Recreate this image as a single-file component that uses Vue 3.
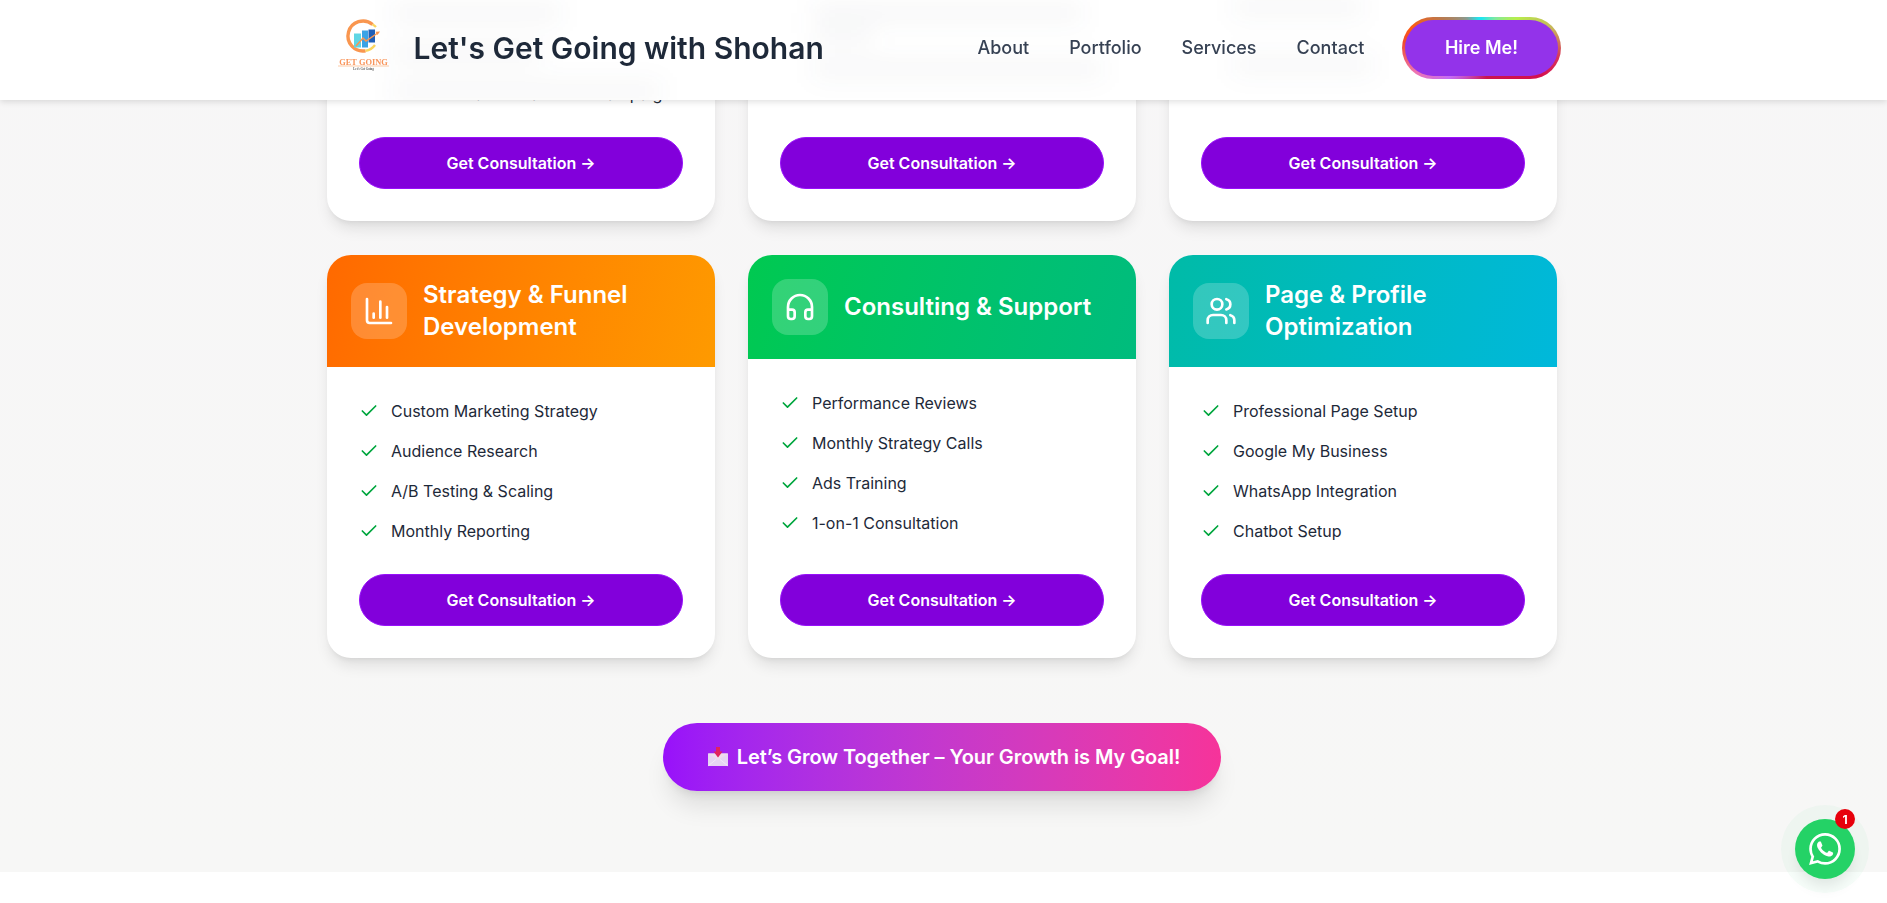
<template>
  <div class="page">
    <header class="site-header">
      <span class="smudges"></span>
      <div class="header-inner">
        <div class="brand">
          <svg class="logo" viewBox="0 0 64 64" aria-label="Get Going logo">
            <path d="M44.6 8.5A15 15 0 1 0 37.6 34.8" fill="none" stroke="#f9964f" stroke-width="3.4" />
            <path d="M44.6 8.5A15 15 0 0 1 48 11" fill="none" stroke="#fbd65e" stroke-width="2.4" />
            <path d="M37.6 34.8A15 15 0 0 0 47 29" fill="none" stroke="#fbd65e" stroke-width="2.4" />
            <path d="M26 17.5h7v14h-7z" fill="#5fd6e4" />
            <path d="M34 14.5h6v17h-6z" fill="#3aa3e6" />
            <path d="M40.5 13.5h6.5v13h-6.5z" fill="#1f5fb8" />
            <path d="M28 30l7-8 3 3 11-7.5" fill="none" stroke="#f9964f" stroke-width="1.5" />
            <path d="M52 15.5l-4.5.2 2 3.4z" fill="#f9964f" />
            <text x="35.5" y="48.5" class="logo-name">GET GOING</text>
            <path d="M10 50h51" stroke="#f9964f" stroke-width="0.5" />
            <text x="35.5" y="54" class="logo-tag">Let's Get Going</text>
          </svg>
          <span class="brand-name">Let's Get Going with Shohan</span>
        </div>
        <nav class="nav">
          <a v-for="link in navLinks" :key="link" class="nav-link">{{ link }}</a>
          <button class="hire-btn"><span class="hire-fill">Hire Me!</span></button>
        </nav>
      </div>
    </header>

    <section class="services">
      <div class="grid">
        <article v-for="card in cards" :key="card.title" class="card">
          <div class="card-head" :class="card.tone">
            <div class="icon-box">
              <svg viewBox="0 0 24 24" class="head-icon">
                <path v-for="d in card.icon" :key="d" :d="d" />
                <circle v-if="card.circle" cx="9" cy="7" r="4" />
              </svg>
            </div>
            <h3>{{ card.title }}</h3>
          </div>
          <div class="card-body">
            <ul>
              <li v-for="item in card.items" :key="item">
                <svg viewBox="0 0 24 24" class="check"><path d="M20 6 9 17l-5-5" /></svg>
                {{ item }}
              </li>
            </ul>
            <button class="consult-btn">Get Consultation →</button>
          </div>
        </article>
      </div>

      <div class="cta-wrap">
        <button class="cta">
          <svg class="mail" viewBox="0 0 20 20">
            <path d="M0 6.5h20V18a1 1 0 0 1-1 1H1a1 1 0 0 1-1-1z" fill="#e6d5f3" />
            <path d="M0 19 8 12.5M20 19 12 12.5" stroke="#f4ecfa" stroke-width="0.8" />
            <path d="M0 6.5 10 13l10-6.5z" fill="#efdcec" />
            <path d="M8 0h4v4.5h2.5L10 10.5 5.5 4.5H8z" fill="#e0245e" />
          </svg>
          Let’s Grow Together – Your Growth is My Goal!
        </button>
      </div>
    </section>

    <a class="whatsapp">
      <span class="ring"></span>
      <svg viewBox="0 0 24 24" class="wa-icon">
        <path d="M17.47 14.38c-.3-.15-1.76-.87-2.03-.97-.27-.1-.47-.15-.67.15-.2.3-.77.97-.94 1.16-.17.2-.35.22-.64.07-.3-.15-1.26-.46-2.39-1.47-.88-.79-1.48-1.76-1.65-2.06-.17-.3-.02-.46.13-.6.13-.14.3-.35.45-.52.15-.17.2-.3.3-.5.1-.2.05-.37-.02-.52-.08-.15-.67-1.61-.92-2.21-.24-.58-.49-.5-.67-.51h-.57c-.2 0-.52.07-.79.37-.27.3-1.04 1.02-1.04 2.48s1.06 2.87 1.21 3.07c.15.2 2.1 3.2 5.08 4.49.71.3 1.26.49 1.69.62.71.23 1.36.2 1.87.12.57-.09 1.76-.72 2.01-1.41.25-.7.25-1.29.17-1.41-.07-.13-.27-.2-.57-.35zM12.05 21.79h-.01a9.87 9.87 0 0 1-5.03-1.38l-.36-.21-3.74.98 1-3.65-.24-.37a9.86 9.86 0 0 1-1.51-5.26c0-5.45 4.44-9.88 9.89-9.88a9.82 9.82 0 0 1 6.99 2.9 9.82 9.82 0 0 1 2.89 6.99c0 5.45-4.44 9.88-9.88 9.88zM20.46 3.49A11.82 11.82 0 0 0 12.05 0C5.5 0 .16 5.34.16 11.89c0 2.1.55 4.14 1.59 5.95L.06 24l6.3-1.65a11.88 11.88 0 0 0 5.68 1.45h.01c6.55 0 11.89-5.34 11.89-11.89a11.82 11.82 0 0 0-3.48-8.41z" />
      </svg>
      <span class="badge">1</span>
    </a>
  </div>
</template>

<script setup>
const navLinks = ["About", "Portfolio", "Services", "Contact"]

const chartIcon = ["M3 3v16a2 2 0 0 0 2 2h16", "M18 17V9", "M13 17V5", "M8 17v-3"]
const headphonesIcon = [
  "M3 14h3a2 2 0 0 1 2 2v3a2 2 0 0 1-2 2H5a2 2 0 0 1-2-2v-7a9 9 0 0 1 18 0v7a2 2 0 0 1-2 2h-1a2 2 0 0 1-2-2v-3a2 2 0 0 1 2-2h3",
]
const usersIcon = [
  "M16 21v-2a4 4 0 0 0-4-4H6a4 4 0 0 0-4 4v2",
  "M22 21v-2a4 4 0 0 0-3-3.87",
  "M16 3.13a4 4 0 0 1 0 7.75",
]

const cards = [
  {
    title: "Facebook & Instagram Ads",
    tone: "tone-blue",
    icon: chartIcon,
    items: ["Campaign Setup", "Audience Targeting", "Creative Design", "Online & Brand Awareness Campaigns"],
  },
  {
    title: "Google Ads",
    tone: "tone-red",
    icon: chartIcon,
    items: ["Search Campaigns", "Display Campaigns", "YouTube Video Ads", "Landing Page Design & Optimization"],
  },
  {
    title: "Content Creation",
    tone: "tone-pink",
    icon: usersIcon,
    circle: true,
    items: ["Content Calendar", "Post Design", "Reels & Video", "Community Care"],
  },
  {
    title: "Strategy & Funnel Development",
    tone: "tone-orange",
    icon: chartIcon,
    items: ["Custom Marketing Strategy", "Audience Research", "A/B Testing & Scaling", "Monthly Reporting"],
  },
  {
    title: "Consulting & Support",
    tone: "tone-green",
    icon: headphonesIcon,
    items: ["Performance Reviews", "Monthly Strategy Calls", "Ads Training", "1-on-1 Consultation"],
  },
  {
    title: "Page & Profile Optimization",
    tone: "tone-teal",
    icon: usersIcon,
    circle: true,
    items: ["Professional Page Setup", "Google My Business", "WhatsApp Integration", "Chatbot Setup"],
  },
]
</script>

<style>
html,
body {
  margin: 0;
  background: #fff;
  overflow: hidden;
}
</style>

<style scoped>
.page {
  font-family: Inter, "Liberation Sans", sans-serif;
  color: #1e2939;
  height: 903px;
  overflow: hidden;
}

/* sticky bar sits over the scrolled content */
.site-header {
  position: fixed;
  top: 0;
  left: 0;
  right: 0;
  z-index: 20;
  box-sizing: border-box;
  height: 100px;
  padding-bottom: 5px;
  overflow: hidden;
  background: #fff;
  box-shadow: 0 2px 6px rgba(0, 0, 0, 0.12);
}

/* soft grey bands: the text rows showing through the frosted bar */
.smudges {
  position: absolute;
  inset: 0;
  filter: blur(13px);
  --band: linear-gradient(rgba(40, 50, 70, 0.06), rgba(40, 50, 70, 0.06));
  background:
    var(--band) 391px 6px / 170px 14px no-repeat,
    var(--band) 391px 46px / 150px 14px no-repeat,
    var(--band) 391px 84px / 270px 14px no-repeat,
    var(--band) 813px 6px / 270px 14px no-repeat,
    var(--band) 813px 30px / 60px 12px no-repeat,
    var(--band) 813px 62px / 290px 14px no-repeat,
    var(--band) 1233px 0 / 130px 14px no-repeat,
    var(--band) 1233px 58px / 140px 14px no-repeat;
}

.header-inner {
  position: relative;
  max-width: 1232px;
  height: 100%;
  margin: 0 auto;
  display: flex;
  align-items: center;
  justify-content: space-between;
}

.brand {
  display: flex;
  align-items: center;
  gap: 22px;
}

.logo {
  width: 64px;
  height: 64px;
  flex: none;
}

.logo-name {
  font-family: "Liberation Serif", serif;
  font-weight: 700;
  font-size: 8.4px;
  fill: #f9945a;
  text-anchor: middle;
}

.logo-tag {
  font-family: "Liberation Serif", serif;
  font-weight: 700;
  font-size: 3px;
  fill: #555;
  text-anchor: middle;
}

.brand-name {
  font-size: 30px;
  font-weight: 600;
  color: #1e2939;
}

.nav {
  display: flex;
  align-items: center;
  gap: 40px;
}

.nav-link {
  font-size: 18px;
  font-weight: 500;
  color: #364153;
}

.hire-btn {
  border: 0;
  padding: 3px;
  margin-right: -1px;
  margin-left: -2px;
  border-radius: 999px;
  background: conic-gradient(
    from 0deg,
    #1fe5f0 0deg,
    #7fe9a0 25deg,
    #b6ee4c 50deg,
    #c8b45a 75deg,
    #d8325c 97deg,
    #d4104e 115deg,
    #c9154f 170deg,
    #c56cf5 228deg,
    #ee76b0 250deg,
    #ee4a30 274deg,
    #ff5a10 286deg,
    #b87a50 307deg,
    #8a9a90 333deg,
    #1fe5f0 355deg
  );
  font-family: inherit;
}

.hire-fill {
  display: block;
  padding: 16px 39.5px;
  border-radius: 999px;
  background: #9333ea;
  color: #fff;
  font-size: 18px;
  font-weight: 600;
  line-height: 24px;
}

/* page is scrolled in the reference, first row runs off the top */
.services {
  margin-top: -182px;
  padding-right: 3px;
  height: 1054px;
  background: linear-gradient(180deg, #f7f6f7, #f7f7f6);
}

.grid {
  width: 1230px;
  margin: 0 auto;
  display: grid;
  grid-template-columns: repeat(3, 388px);
  column-gap: 33px;
  row-gap: 34px;
}

.card {
  display: flex;
  flex-direction: column;
  background: #fff;
  border-radius: 24px;
  overflow: hidden;
  box-shadow: 0 10px 15px -3px rgba(0, 0, 0, 0.1), 0 4px 6px -4px rgba(0, 0, 0, 0.1);
}

.card-head {
  display: flex;
  align-items: center;
  gap: 16px;
  padding: 24px;
  color: #fff;
}

.card-head h3 {
  margin: 0;
  font-size: 24px;
  font-weight: 600;
  line-height: 32px;
}

.tone-blue { background: linear-gradient(105deg in oklab, #2b7fff, #00b8db); }
.tone-red { background: linear-gradient(105deg in oklab, #fb2c36, #ff2056); }
.tone-pink { background: linear-gradient(105deg in oklab, #ad46ff, #f6339a); }
.tone-orange { background: linear-gradient(105deg in oklab, #ff6900, #fe9a00); }
.tone-green { background: linear-gradient(105deg in oklab, #00c950, #00bc7d); }
.tone-teal { background: linear-gradient(105deg in oklab, #00bba7, #00b8db); }

.icon-box {
  flex: none;
  width: 56px;
  height: 56px;
  display: flex;
  align-items: center;
  justify-content: center;
  border-radius: 16px;
  background: rgba(255, 255, 255, 0.2);
}

.head-icon {
  width: 32px;
  height: 32px;
  fill: none;
  stroke: #fff;
  stroke-width: 2;
  stroke-linecap: round;
  stroke-linejoin: round;
}

.card-body {
  flex: 1;
  display: flex;
  flex-direction: column;
  justify-content: space-between;
  padding: 32px;
}

.card-body ul {
  list-style: none;
  margin: 0 0 31px;
  padding: 0;
  display: flex;
  flex-direction: column;
  gap: 16px;
}

.card-body li {
  display: flex;
  align-items: center;
  gap: 12px;
  font-size: 16px;
  line-height: 24px;
}

.check {
  flex: none;
  width: 20px;
  height: 20px;
  fill: none;
  stroke: #00a63e;
  stroke-width: 2;
  stroke-linecap: round;
  stroke-linejoin: round;
}

.consult-btn {
  height: 52px;
  border: 1px solid #9810fa;
  border-radius: 999px;
  background: #8200db;
  color: #fff;
  font-family: inherit;
  font-size: 16px;
  font-weight: 600;
}

.cta-wrap {
  display: flex;
  justify-content: center;
  margin-top: 65px;
}

.cta {
  display: flex;
  align-items: center;
  gap: 9px;
  height: 68px;
  padding: 0 41px 0 45px;
  border: 0;
  border-radius: 999px;
  background: linear-gradient(to right in oklab, #9810fa, #f6339a);
  color: #fff;
  font-family: inherit;
  font-size: 20px;
  font-weight: 600;
  letter-spacing: -0.07px;
  box-shadow: 0 20px 25px -5px rgba(0, 0, 0, 0.1), 0 8px 10px -6px rgba(0, 0, 0, 0.1);
}

.mail {
  width: 20px;
  height: 20px;
}

.whatsapp {
  position: fixed;
  right: 32px;
  bottom: 24px;
  z-index: 30;
  width: 60px;
  height: 60px;
  display: flex;
  align-items: center;
  justify-content: center;
  border-radius: 50%;
  background: #25d366;
  box-shadow: 0 10px 15px -3px rgba(0, 0, 0, 0.1);
}

.ring {
  position: absolute;
  inset: -14px;
  border-radius: 50%;
  background: rgba(37, 211, 102, 0.04);
}

.wa-icon {
  position: relative;
  width: 32px;
  height: 32px;
  fill: #fff;
}

.badge {
  position: absolute;
  top: -10px;
  right: 0;
  width: 20px;
  height: 20px;
  display: flex;
  align-items: center;
  justify-content: center;
  border-radius: 50%;
  background: #e7000b;
  color: #fff;
  font-size: 12px;
  font-weight: 700;
}
</style>
